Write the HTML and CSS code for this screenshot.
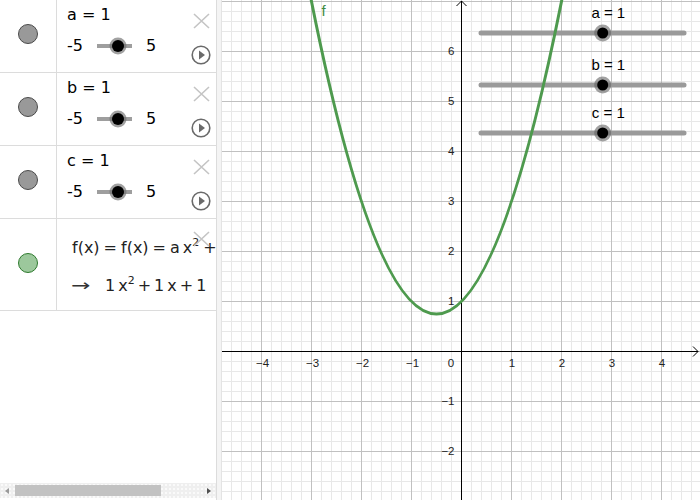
FILE: index.html
```html
<!DOCTYPE html>
<html>
<head>
<meta charset="utf-8">
<link rel="stylesheet" href="styles.css">
</head>
<body>
<div class="app">
  <div class="algebra">
    <div class="row">
      <div class="marker"><span class="dot"></span></div>
      <div class="body">
        <div class="label">a = 1</div>
        <div class="slider-line"><span>-5</span><span class="track"><span class="knob" style="left:60%"></span></span><span>5</span></div>
      </div>
      <svg class="x-icon" viewBox="0 0 17 16"><path d="M1 1 L16 15 M16 1 L1 15"/></svg>
      <svg class="play-icon" viewBox="0 0 20 20"><circle cx="10" cy="10" r="8.8"/><path d="M8 5.6 L14 10 L8 14.4 Z"/></svg>
    </div>
    <div class="row">
      <div class="marker"><span class="dot"></span></div>
      <div class="body">
        <div class="label">b = 1</div>
        <div class="slider-line"><span>-5</span><span class="track"><span class="knob" style="left:60%"></span></span><span>5</span></div>
      </div>
      <svg class="x-icon" viewBox="0 0 17 16"><path d="M1 1 L16 15 M16 1 L1 15"/></svg>
      <svg class="play-icon" viewBox="0 0 20 20"><circle cx="10" cy="10" r="8.8"/><path d="M8 5.6 L14 10 L8 14.4 Z"/></svg>
    </div>
    <div class="row">
      <div class="marker"><span class="dot"></span></div>
      <div class="body">
        <div class="label">c = 1</div>
        <div class="slider-line"><span>-5</span><span class="track"><span class="knob" style="left:60%"></span></span><span>5</span></div>
      </div>
      <svg class="x-icon" viewBox="0 0 17 16"><path d="M1 1 L16 15 M16 1 L1 15"/></svg>
      <svg class="play-icon" viewBox="0 0 20 20"><circle cx="10" cy="10" r="8.8"/><path d="M8 5.6 L14 10 L8 14.4 Z"/></svg>
    </div>
    <div class="row func">
      <div class="marker"><span class="dot green"></span></div>
      <div class="body">
        <div class="math line1">f(x)<span class="op">=</span>f(x)<span class="op">=</span>a<span class="thin"></span>x<sup>2</sup><span class="op">+</span></div>
        <div class="math line2"><span class="arrow">→</span>1<span class="thin"></span>x<sup>2</sup><span class="op">+</span>1<span class="thin"></span>x<span class="op">+</span>1</div>
      </div>
      <svg class="x-icon" viewBox="0 0 17 16"><path d="M1 1 L16 15 M16 1 L1 15"/></svg>
    </div>
    <div class="spacer"></div>
    <div class="hscroll">
      <span class="arr left"></span>
      <div class="thumb"></div>
      <span class="arr right"></span>
    </div>
  </div>
  <div class="splitter"></div>
  <div class="graph">
    <svg class="canvas" width="478" height="500" viewBox="0 0 478 500">
      <defs>
        <pattern id="minor" x="239" y="351" width="10" height="10" patternUnits="userSpaceOnUse">
          <rect x="0" y="0" width="1" height="10" fill="#e8e8e8"/>
          <rect x="0" y="0" width="10" height="1" fill="#e8e8e8"/>
        </pattern>
        <pattern id="major" x="239" y="351" width="50" height="50" patternUnits="userSpaceOnUse">
          <rect x="0" y="0" width="1" height="50" fill="#c0c0c0"/>
          <rect x="0" y="0" width="50" height="1" fill="#c0c0c0"/>
        </pattern>
      </defs>
      <rect width="478" height="500" fill="#fff"/>
      <rect width="478" height="500" fill="url(#minor)"/>
      <rect width="478" height="500" fill="url(#major)"/>
      <g class="axes">
        <line x1="0" y1="351.5" x2="476" y2="351.5"/>
        <line x1="239.5" y1="1" x2="239.5" y2="500"/>
        <path d="M471 346.5 L476 351.5 L471 356.5"/>
        <path d="M234.5 6 L239.5 1 L244.5 6"/>
      </g>
      <g class="ticks">
        <text x="40.5" y="367.3" text-anchor="middle">−4</text>
        <text x="90.5" y="367.3" text-anchor="middle">−3</text>
        <text x="140.5" y="367.3" text-anchor="middle">−2</text>
        <text x="190.5" y="367.3" text-anchor="middle">−1</text>
        <text x="229" y="367.3" text-anchor="middle">0</text>
        <text x="290" y="367.3" text-anchor="middle">1</text>
        <text x="340" y="367.3" text-anchor="middle">2</text>
        <text x="390" y="367.3" text-anchor="middle">3</text>
        <text x="440" y="367.3" text-anchor="middle">4</text>
        <text x="232.5" y="55.3" text-anchor="end">6</text>
        <text x="232.5" y="105.3" text-anchor="end">5</text>
        <text x="232.5" y="155.3" text-anchor="end">4</text>
        <text x="232.5" y="205.3" text-anchor="end">3</text>
        <text x="232.5" y="255.3" text-anchor="end">2</text>
        <text x="232.5" y="305.3" text-anchor="end">1</text>
        <text x="232.5" y="405.3" text-anchor="end">−1</text>
        <text x="232.5" y="455.3" text-anchor="end">−2</text>
      </g>
      <g class="gsliders">
        <line x1="259" y1="33" x2="462" y2="33"/>
        <line x1="259" y1="85" x2="462" y2="85"/>
        <line x1="259" y1="133" x2="462" y2="133"/>
      </g>
      <path class="curve" d="M79.5 -50.5 Q214.5 678.5 349.5 -50.5"/>
      <text class="flabel" x="99.5" y="16">f</text>
      <g class="knobs">
        <circle class="halo" cx="380.7" cy="33" r="8.5"/><circle cx="380.7" cy="33" r="5.5"/>
        <circle class="halo" cx="380.7" cy="85" r="8.5"/><circle cx="380.7" cy="85" r="5.5"/>
        <circle class="halo" cx="380.7" cy="133" r="8.5"/><circle cx="380.7" cy="133" r="5.5"/>
      </g>
      <g class="glabels">
        <text x="386.3" y="18.3" text-anchor="middle">a = 1</text>
        <text x="386.3" y="70.3" text-anchor="middle">b = 1</text>
        <text x="386.3" y="118.3" text-anchor="middle">c = 1</text>
      </g>
    </svg>
  </div>
</div>
</body>
</html>
```
FILE: styles.css
```css
* { box-sizing: border-box; }
html, body { margin: 0; padding: 0; height: 100%; }
body {
  font-family: "DejaVu Sans", "Liberation Sans", sans-serif;
  background: #fff;
  color: #000;
  overflow: hidden;
}
.app {
  display: flex;
  width: 700px;
  height: 500px;
}
.algebra {
  width: 217px;
  flex: none;
  border-right: 1px solid #dcdcdc;
  display: flex;
  flex-direction: column;
  overflow: hidden;
}
.row {
  position: relative;
  display: flex;
  height: 73px;
  flex: none;
  border-bottom: 1px solid #dcdcdc;
}
.row.func { height: 92px; }
.marker {
  width: 57px;
  flex: none;
  border-right: 1px solid #dcdcdc;
  display: flex;
  justify-content: center;
  align-items: flex-start;
  padding-top: 24px;
  padding-right: 1px;
}
.row.func .marker { padding-top: 34px; }
.dot {
  width: 20px;
  height: 20px;
  border-radius: 50%;
  background: #999999;
  border: 1px solid #4a4a4a;
}
.dot.green {
  background: #9cc89c;
  border-color: #2e7a2e;
}
.body {
  flex: 1;
  min-width: 0;
  padding: 5px 0 0 10px;
  white-space: nowrap;
  overflow: hidden;
}
.label {
  font-size: 16px;
  line-height: 20px;
}
.slider-line {
  display: flex;
  align-items: center;
  height: 20px;
  margin-top: 11px;
  font-size: 16px;
  line-height: 20px;
}
.track {
  position: relative;
  width: 35px;
  height: 4px;
  background: #9e9e9e;
  margin: 0 14px 0 14px;
}
.knob {
  position: absolute;
  top: 50%;
  width: 12px;
  height: 12px;
  border-radius: 50%;
  background: #000;
  transform: translate(-50%, -50%);
  box-shadow: 0 0 0 2.5px rgba(110, 110, 110, 0.65);
}
.x-icon {
  position: absolute;
  left: 193px;
  top: 13px;
  width: 17px;
  height: 16px;
  fill: none;
  stroke: #c4c4c4;
  stroke-width: 1.6;
}
.row.func .x-icon { top: 12px; }
.play-icon {
  position: absolute;
  left: 191px;
  top: 44.5px;
  width: 20px;
  height: 20px;
}
.play-icon circle {
  fill: none;
  stroke: #6a6a6a;
  stroke-width: 1.6;
}
.play-icon path { fill: #6a6a6a; }

.row.func .body { padding-top: 19px; }
.math {
  font-size: 16px;
  line-height: 20px;
  color: #222;
}
.line1 { padding-left: 5px; }
.line2 { margin-top: 18px; padding-left: 4px; }
.op { margin: 0 4px; }
.line2 .op { margin: 0 3px; }
.thin { display: inline-block; width: 3px; }
.math sup {
  font-size: 11px;
  line-height: 0;
  vertical-align: 7px;
}
.arrow {
  display: inline-block;
  width: 34px;
  color: #333;
  transform: scaleX(1.45);
  transform-origin: 0 50%;
}

.spacer { flex: 1; }
.hscroll {
  flex: none;
  height: 15px;
  margin-bottom: 2px;
  display: flex;
  align-items: center;
  background-color: #efefef;
  background-image: radial-gradient(#fafafa 0.8px, transparent 0.9px);
  background-size: 4px 4px;
  padding: 0 5px;
}
.arr {
  width: 0;
  height: 0;
  border-top: 3.5px solid transparent;
  border-bottom: 3.5px solid transparent;
  flex: none;
}
.arr.left { border-right: 4px solid #9a9a9a; }
.arr.right { border-left: 4px solid #505050; margin-left: auto; }
.thumb {
  width: 146px;
  height: 11px;
  background: #c2c2c2;
  margin-left: 6px;
}

.splitter {
  width: 5px;
  flex: none;
  background: #f4f4f4;
  border-right: 1px solid #e4e4e4;
}
.graph {
  flex: 1;
  min-width: 0;
  overflow: hidden;
}
.canvas { display: block; }
.axes line, .axes path {
  stroke: #000;
  stroke-width: 1;
  fill: none;
}
.ticks text {
  font-family: "Liberation Sans", Arial, sans-serif;
  font-size: 11.5px;
  fill: #222;
}
.gsliders line {
  stroke: #9a9a9a;
  stroke-width: 5;
  stroke-linecap: round;
}
.curve {
  fill: none;
  stroke: #4e9a4e;
  stroke-width: 3;
}
.flabel {
  font-family: "Liberation Sans", Arial, sans-serif;
  font-size: 15px;
  fill: #3f8a3f;
}
.knobs circle { fill: #000; }
.knobs .halo { fill: rgba(100, 100, 100, 0.6); }
.glabels text {
  font-family: "Liberation Sans", Arial, sans-serif;
  font-size: 15px;
  fill: #000;
}
```
